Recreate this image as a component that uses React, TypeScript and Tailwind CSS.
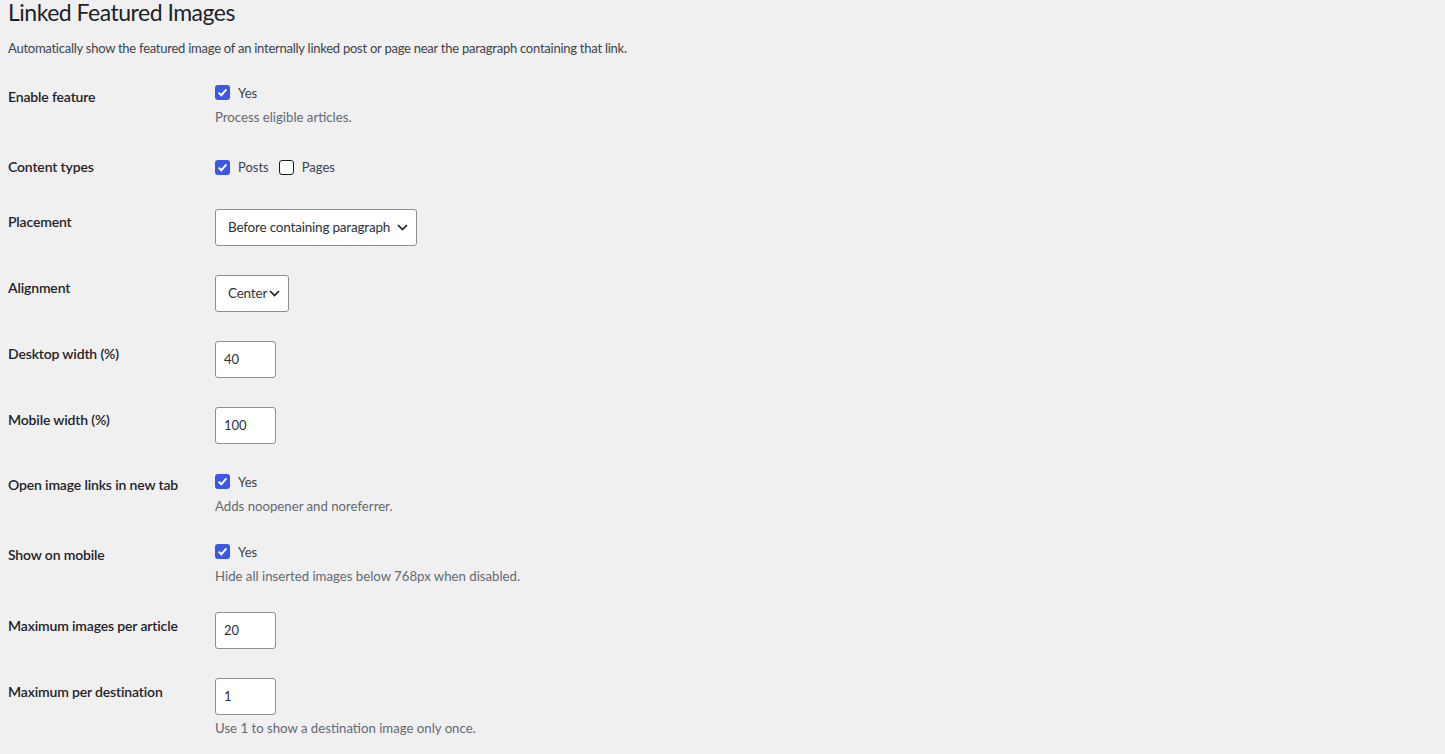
import React from "react";

const font = { fontFamily: '"Segoe UI", Lato, "Noto Sans", sans-serif' };

function Check({ checked, label }: { checked: boolean; label: string }) {
  return (
    <span className="inline-flex items-center">
      {checked ? (
        <span className="w-[15px] h-[15px] rounded-[3px] bg-[#3b57e6] flex items-center justify-center shrink-0">
          <svg width="11" height="11" viewBox="0 0 11 11">
            <path d="M1.6 5.6 L4.3 8.2 L9.4 2.4" fill="none" stroke="#fff" strokeWidth="2" />
          </svg>
        </span>
      ) : (
        <span className="w-[15px] h-[15px] rounded-[3px] border border-[#1d1d1d] bg-white shrink-0" />
      )}
      <span className="ml-[8px] text-[13px] leading-[18px] text-[#3c434a]">{label}</span>
    </span>
  );
}

function Desc({ children }: { children: React.ReactNode }) {
  return <p className="text-[13.2px] leading-[18px] text-[#646970] mt-[4px]">{children}</p>;
}

function Select({ value, w }: { value: string; w: string }) {
  return (
    <div className={`${w} h-[37px] bg-white border border-[#8c8f94] rounded-[3px] flex items-center gap-[2px] pl-[12px] pr-[8px] text-[13.5px] tracking-[-0.2px] text-[#2c3338]`}>
      <span className="flex-1 whitespace-nowrap">{value}</span>
      <svg width="11" height="7" viewBox="0 0 11 7" className="shrink-0">
        <path d="M1 1 L5.5 5.5 L10 1" fill="none" stroke="#1d2327" strokeWidth="1.7" />
      </svg>
    </div>
  );
}

function Input({ value }: { value: string }) {
  return (
    <div className="w-[61px] h-[37px] bg-white border border-[#8c8f94] rounded-[3px] flex items-center pl-[8px] text-[13px] text-[#2c3338]">
      {value}
    </div>
  );
}

function Row({ label, h, pt, children }: { label: string; h: string; pt: string; children: React.ReactNode }) {
  return (
    <div className={`flex ${h}`}>
      <div className="w-[207px] pt-[20px] text-[14px] leading-[18px] tracking-[-0.15px] font-semibold text-[#1d2327]">{label}</div>
      <div className={`flex-1 ${pt}`}>{children}</div>
    </div>
  );
}

export default function App() {
  return (
    <div className="min-h-[754px] bg-[#f0f0f1] pl-[8px]" style={font}>
      <h1 className="text-[23px] leading-[25px] tracking-[-0.5px] font-normal text-[#1d2327]">Linked Featured Images</h1>
      <p className="text-[13px] leading-[18px] tracking-[-0.25px] text-[#3c434a] mt-[14px]">
        Automatically show the featured image of an internally linked post or page near the paragraph containing that link.
      </p>
      <div className="mt-[11px]">
        <Row label="Enable feature" h="h-[70px]" pt="pt-[12px]">
          <Check checked label="Yes" />
          <Desc>Process eligible articles.</Desc>
        </Row>
        <Row label="Content types" h="h-[55px]" pt="pt-[20px]">
          <div className="flex items-center gap-[10px]">
            <Check checked label="Posts" />
            <Check checked={false} label="Pages" />
          </div>
        </Row>
        <Row label="Placement" h="h-[66px]" pt="pt-[16px]">
          <Select value="Before containing paragraph" w="w-[202px]" />
        </Row>
        <Row label="Alignment" h="h-[66px]" pt="pt-[16px]">
          <Select value="Center" w="w-[74px]" />
        </Row>
        <Row label="Desktop width (%)" h="h-[66px]" pt="pt-[16px]">
          <Input value="40" />
        </Row>
        <Row label="Mobile width (%)" h="h-[65px]" pt="pt-[16px]">
          <Input value="100" />
        </Row>
        <Row label="Open image links in new tab" h="h-[70px]" pt="pt-[13px]">
          <Check checked label="Yes" />
          <Desc>Adds noopener and noreferrer.</Desc>
        </Row>
        <Row label="Show on mobile" h="h-[71px]" pt="pt-[13px]">
          <Check checked label="Yes" />
          <Desc>Hide all inserted images below 768px when disabled.</Desc>
        </Row>
        <Row label="Maximum images per article" h="h-[66px]" pt="pt-[15px]">
          <Input value="20" />
        </Row>
        <Row label="Maximum per destination" h="h-[91px]" pt="pt-[15px]">
          <Input value="1" />
          <Desc>Use 1 to show a destination image only once.</Desc>
        </Row>
      </div>
    </div>
  );
}
